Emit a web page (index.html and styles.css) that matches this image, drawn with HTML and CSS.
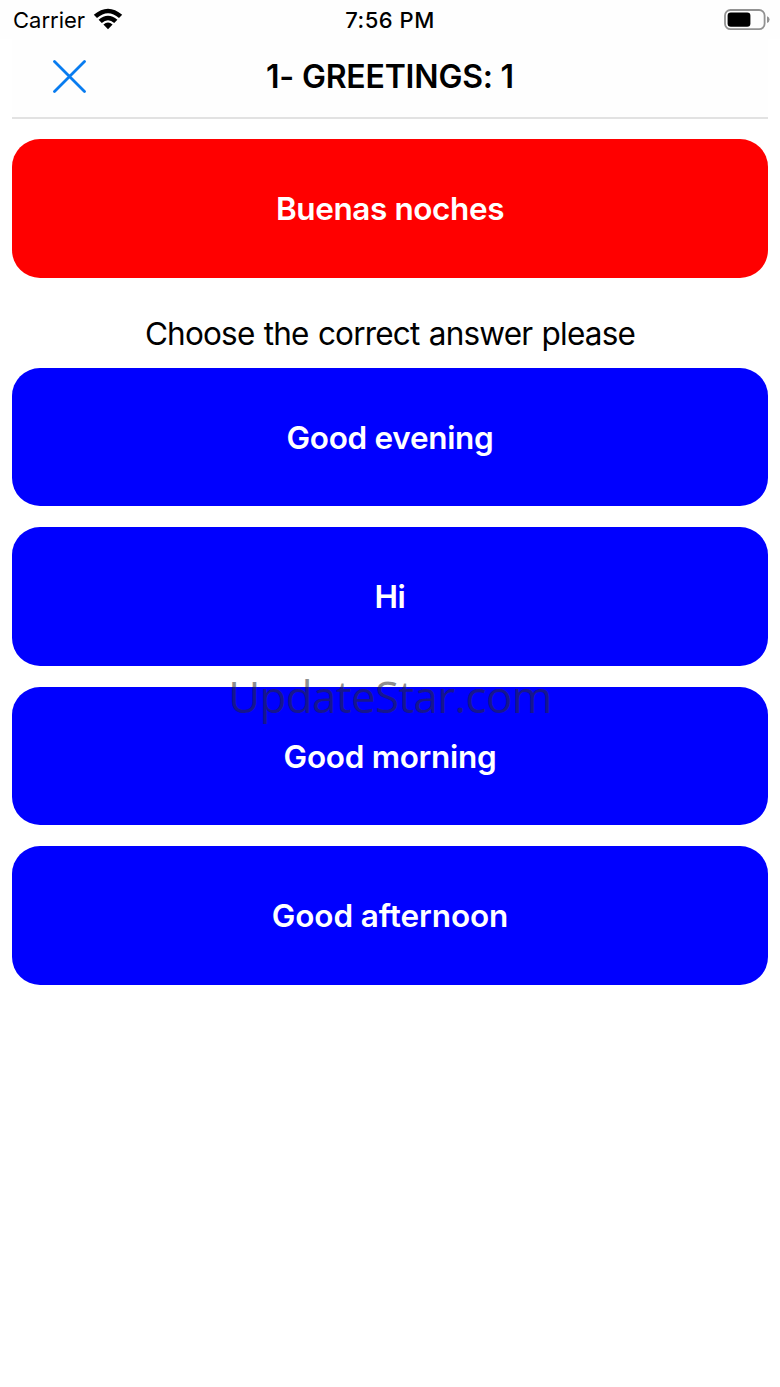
FILE: index.html
```html
<!DOCTYPE html>
<html lang="en">
<head>
<meta charset="utf-8">
<title>Greetings</title>
<link rel="stylesheet" href="styles.css">
</head>
<body>
<div class="screen">
  <header class="status">
    <div class="network"><span class="carrier">Carrier</span>
      <svg class="wifi" width="30" height="22" viewBox="0 0 30 22"><path d="M.8 6.8Q15-5.4 29.2 6.8L26 10.1Q15 .6 4 10.1ZM5.6 11.8Q15 3.8 24.4 11.8L21.2 15Q15 9.7 8.8 15ZM10.4 16.5Q15 12.6 19.6 16.5L15 21.2Z"/></svg>
    </div>
    <time class="time">7:56 PM</time>
    <svg class="battery" width="46" height="22" viewBox="0 0 46 22"><rect x="1" y="1" width="39.6" height="19.2" rx="5.5" fill="none" stroke="#929292" stroke-width="1.8"/><rect x="3.6" y="3.5" width="22.8" height="14.2" rx="3.2"/><path d="M43 7.3Q45.6 8 45.6 10.6T43 14Z" fill="#929292"/></svg>
  </header>
  <nav class="navbar">
    <button class="close" aria-label="Close"><svg width="34" height="34" viewBox="0 0 34 34"><path d="M2.5 1.5L32.5 31.5M32.5 1.5L2.5 31.5"/></svg></button>
    <h1 class="title">1- GREETINGS: 1</h1>
  </nav>
  <main class="quiz">
    <div class="card question">Buenas noches</div>
    <p class="prompt">Choose the correct answer please</p>
    <div class="answers">
      <button class="card">Good evening</button>
      <button class="card">Hi</button>
      <button class="card">Good morning</button>
      <button class="card long">Good afternoon</button>
    </div>
  </main>
  <div class="watermark">UpdateStar.com</div>
</div>
</body>
</html>
```
FILE: styles.css
```css
* { box-sizing: border-box; }
body { margin: 0; background: #fff; color: #000; font-family: Inter, "Liberation Sans", sans-serif; }
button { border: 0; padding: 0; background: none; font: inherit; }
svg { display: block; }
.screen { position: relative; height: 1387px; overflow: hidden; }
.status { display: grid; grid-template-columns: 1fr auto 1fr; align-items: center; height: 39px; padding: 0 10px 0 12px; background: #fefefe; }
.network { display: flex; align-items: center; gap: 8px; }
.carrier { font-size: 22px; line-height: 38px; padding-left: 1px; }
.wifi { margin-bottom: 2px; }
.time { font-size: 22px; font-weight: 550; letter-spacing: .5px; line-height: 39px; padding: 1px 2px 0 0; }
.battery { justify-self: end; }
.navbar { display: grid; grid-template-columns: 1fr auto 1fr; align-items: center; height: 80px; margin: 0 12px; padding-bottom: 2px; border-bottom: 2px solid #e2e2e2; background: #fefefe; }
.close { justify-self: start; margin: 0 0 1px 40px; }
.close path { fill: none; stroke: #087cf0; stroke-width: 2.8; stroke-linecap: round; }
.title { margin: 0; font-size: 32px; font-weight: 600; letter-spacing: -.2px; line-height: 40px; }
.quiz { padding: 20px 12px 0; }
.card { display: flex; align-items: center; justify-content: center; width: 100%; height: 138.5px; padding-top: 2px; border-radius: 28px; background: #00f; color: #fff; font-size: 31.5px; font-weight: 580; letter-spacing: -.3px; line-height: 40px; }
.long { letter-spacing: -.1px; }
.question { background: #f00; letter-spacing: -.4px; }
.prompt { margin: 36px 0 14px; font-size: 31.5px; letter-spacing: -.8px; word-spacing: 1.2px; line-height: 40px; text-align: center; }
.answers { display: grid; gap: 21px; }
.watermark { position: absolute; top: 666px; left: 0; width: 100%; text-align: center; font: 44px/60px "Open Sans", sans-serif; letter-spacing: -.65px; color: rgba(43, 43, 43, .53); }
```
